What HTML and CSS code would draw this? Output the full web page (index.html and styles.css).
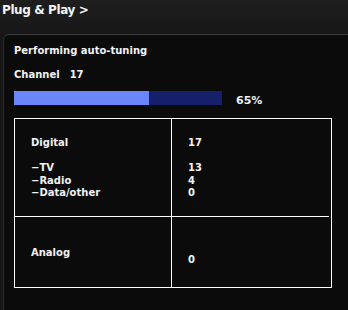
FILE: index.html
```html
<!DOCTYPE html>
<html>
<head>
<meta charset="utf-8">
<link rel="stylesheet" href="styles.css">
</head>
<body>
<div class="screen">
  <header class="topbar">Plug &amp; Play &gt;</header>
  <section class="panel">
    <div class="title">Performing auto-tuning</div>
    <div class="channel"><span>Channel</span><span>17</span></div>
    <div class="progress-row">
      <div class="track"><div class="fill" style="width:65%"></div></div>
      <div class="pct">65%</div>
    </div>
    <div class="grid">
      <div class="cell c1 r1">
        <div>Digital</div>
        <div class="gap"></div>
        <div>&minus;TV</div>
        <div>&minus;Radio</div>
        <div>&minus;Data/other</div>
      </div>
      <div class="cell c2 r1">
        <div>17</div>
        <div class="gap"></div>
        <div>13</div>
        <div>4</div>
        <div>0</div>
      </div>
      <div class="cell c1 r2 analog">Analog</div>
      <div class="cell c2 r2 analog-val">0</div>
    </div>
  </section>
</div>
</body>
</html>
```

FILE: styles.css
```css
html, body {
  margin: 0;
  padding: 0;
  background: #181818;
}
.screen {
  width: 348px;
  height: 310px;
  display: flex;
  flex-direction: column;
  font-family: "DejaVu Sans", Verdana, sans-serif;
  font-weight: bold;
  color: #f2f2f2;
  background: linear-gradient(#1e1e1e 0px, #171717 34px, #171717 100%);
  overflow: hidden;
}
.topbar {
  height: 34px;
  box-sizing: border-box;
  padding: 3px 0 0 2px;
  font-size: 12px;
  line-height: 14px;
  letter-spacing: -0.4px;
}
.panel {
  flex: 1;
  margin-left: 3px;
  background: #0b0b0b;
  border-top: 1px solid #3a3a3a;
  border-left: 1px solid #2c2c2c;
  border-top-left-radius: 6px;
  padding: 9px 0 0 10px;
  font-size: 10px;
  letter-spacing: 0;
}
.title {
  line-height: 14px;
}
.channel {
  margin-top: 10px;
  line-height: 14px;
  display: flex;
  gap: 10px;
}
.progress-row {
  margin-top: 9px;
  display: flex;
  align-items: flex-start;
}
.track {
  width: 208px;
  height: 14px;
  background: #16206a;
}
.fill {
  height: 100%;
  background: #6b86f8;
}
.pct {
  margin-left: 14px;
  margin-top: 3px;
  font-size: 11px;
  line-height: 14px;
}
.grid {
  margin-top: 10px;
  width: 316px;
  display: grid;
  grid-template-columns: 157px 157px;
  grid-template-rows: 98px 70px;
  border: 1px solid #ffffff;
}
.cell {
  box-sizing: border-box;
  line-height: 12.6px;
}
.c1 {
  border-right: 1px solid #ffffff;
  padding-left: 16px;
}
.c2 {
  padding-left: 16px;
}
.r1 {
  border-bottom: 1px solid #ffffff;
  padding-top: 18px;
}
.gap {
  height: 12.6px;
}
.analog {
  padding-top: 30px;
}
.analog-val {
  padding-top: 37px;
}
```
